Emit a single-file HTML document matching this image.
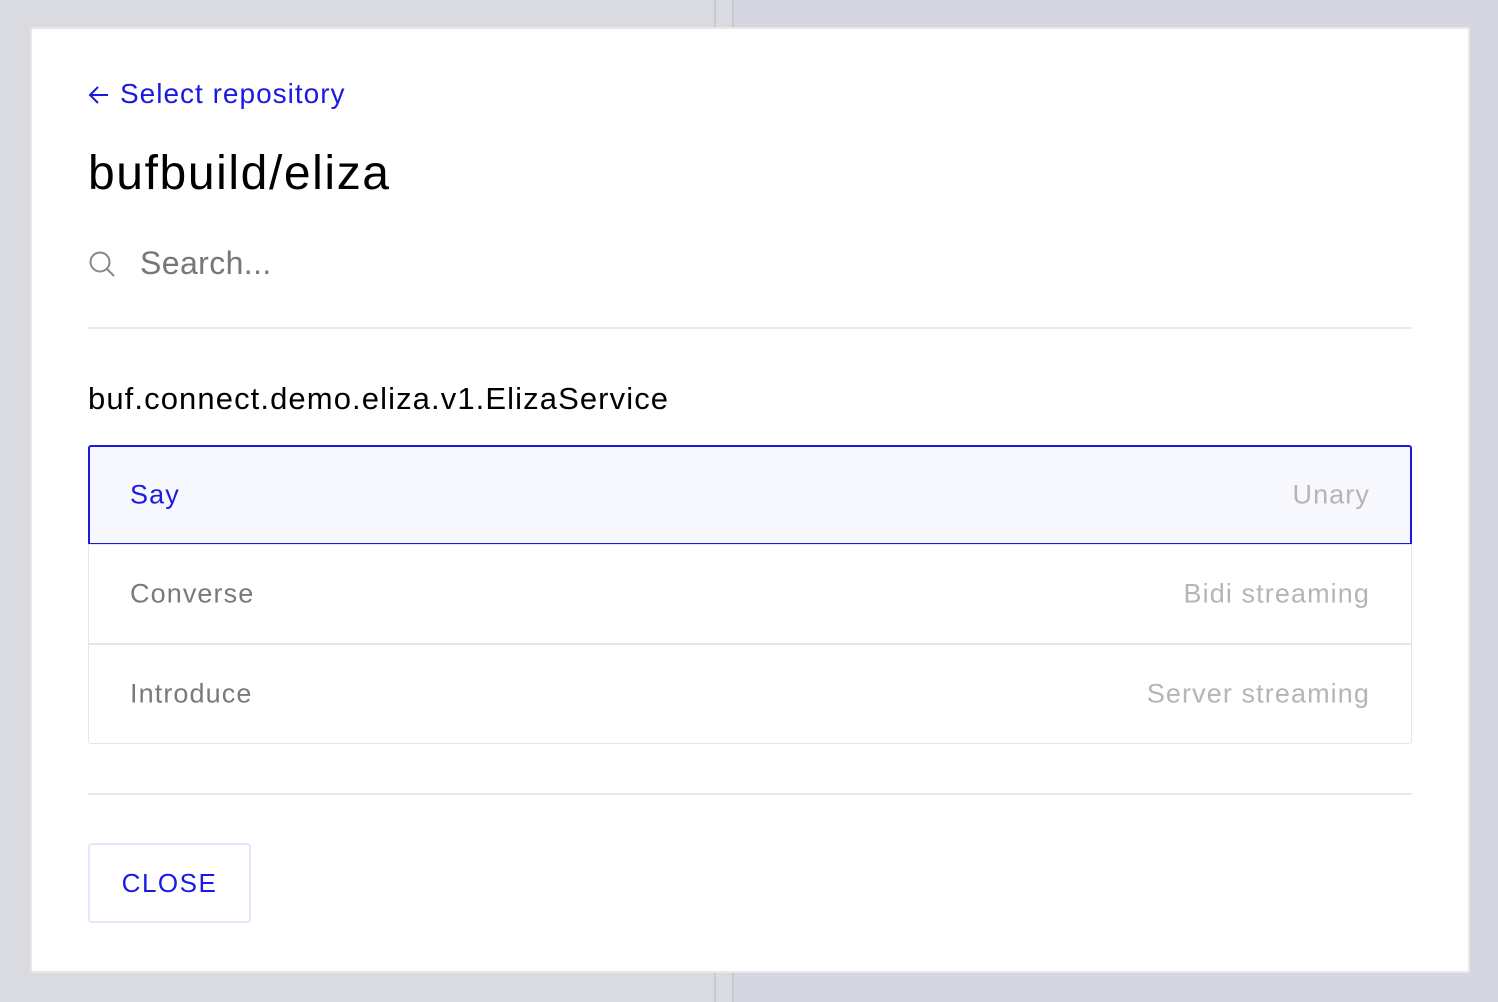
<!DOCTYPE html>
<html><head><meta charset="utf-8"><style>
*{margin:0;padding:0;box-sizing:border-box}
body{width:1498px;height:1002px;overflow:hidden;background:#dadbe0;font-family:"Liberation Sans",sans-serif;position:relative}
.rbg{position:absolute;left:733px;top:0;right:0;bottom:0;background:#d6d6e0}
.vl{position:absolute;top:0;bottom:0;width:2px;background:#c9c9d0}
.modal{position:absolute;left:30px;top:27px;width:1440px;height:946px;background:#fff;border:2px solid #e8e8ea;border-radius:3px}
.a{position:absolute;white-space:nowrap}
.row{position:absolute;left:88px;width:1324px;height:100px;border:1px solid #e6e6e8}
.row span{position:absolute;top:50%;transform:translateY(-50%);font-size:27px;color:#7a7a7a;letter-spacing:1.1px}
.row .l{left:41px}.row .r{right:41px;color:#b5b5b5}
</style></head><body>
<div class="rbg"></div>
<div class="vl" style="left:714px"></div>
<div class="vl" style="left:732px"></div>
<div class="modal"></div>
<svg class="a" style="left:88px;top:83px" width="24" height="24" viewBox="0 0 24 24"><path d="M20 12H3M10 4l-8 8 8 8" fill="none" stroke="#1a1ae0" stroke-width="2"/></svg>
<div class="a" style="left:120px;top:78px;font-size:28px;color:#1a1ae0;letter-spacing:1px">Select repository</div>
<div class="a" style="left:88px;top:146px;font-size:48px;color:#000;letter-spacing:1.6px">bufbuild/eliza</div>
<svg class="a" style="left:88px;top:250px" width="28" height="28" viewBox="0 0 28 28"><circle cx="12" cy="12" r="9.5" fill="none" stroke="#888" stroke-width="2"/><path d="M19 19l7 7" stroke="#888" stroke-width="2"/></svg>
<div class="a" style="left:140px;top:245px;font-size:32px;color:#777;letter-spacing:0.4px">Search...</div>
<div class="a" style="left:88px;top:327px;width:1324px;height:2px;background:#e8e8ea"></div>
<div class="a" style="left:88px;top:381px;font-size:31px;color:#000;letter-spacing:1.1px">buf.connect.demo.eliza.v1.ElizaService</div>
<div class="row" style="top:445px;border:2px solid #1a1ae0;background:#f7f8fd;border-radius:3px 3px 0 0"><span class="l" style="color:#1a1ae0;left:40px">Say</span><span class="r" style="right:40px">Unary</span></div>
<div class="row" style="top:544px"><span class="l">Converse</span><span class="r">Bidi streaming</span></div>
<div class="row" style="top:644px;border-radius:0 0 3px 3px"><span class="l">Introduce</span><span class="r">Server streaming</span></div>
<div class="a" style="left:88px;top:793px;width:1324px;height:2px;background:#e8e8ea"></div>
<div class="a" style="left:88px;top:843px;width:163px;height:80px;border:2px solid #e4e6fb;border-radius:4px;color:#1a1ae0;font-size:26px;letter-spacing:1.5px;text-align:center;line-height:76px">CLOSE</div>
</body></html>
